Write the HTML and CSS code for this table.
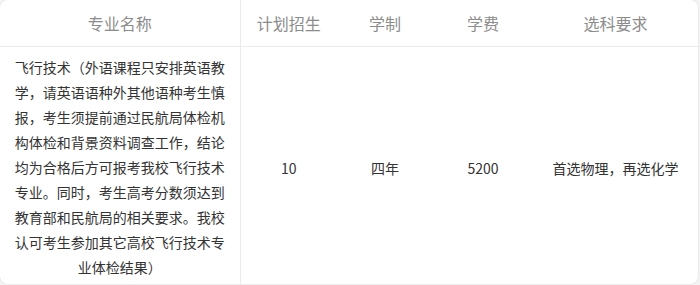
FILE: index.html
```html
<!DOCTYPE html>
<html lang="zh">
<head>
<meta charset="utf-8">
<link rel="stylesheet" href="styles.css">
</head>
<body>
<div class="card">
  <table class="major-table">
    <colgroup>
      <col class="c-name">
      <col class="c-plan">
      <col class="c-years">
      <col class="c-fee">
      <col class="c-req">
    </colgroup>
    <thead>
      <tr>
        <th class="first">专业名称</th>
        <th>计划招生</th>
        <th>学制</th>
        <th>学费</th>
        <th>选科要求</th>
      </tr>
    </thead>
    <tbody>
      <tr>
        <td class="first name">飞行技术（外语课程只安排英语教学，请英语语种外其他语种考生慎报，考生须提前通过民航局体检机构体检和背景资料调查工作，结论均为合格后方可报考我校飞行技术专业。同时，考生高考分数须达到教育部和民航局的相关要求。我校认可考生参加其它高校飞行技术专业体检结果）</td>
        <td>10</td>
        <td>四年</td>
        <td>5200</td>
        <td>首选物理，再选化学</td>
      </tr>
    </tbody>
  </table>
</div>
</body>
</html>
```
FILE: styles.css
```css
html, body {
  margin: 0;
  padding: 0;
  background: #f4f4f4;
}
body {
  font-family: "Noto Sans CJK SC", "Noto Sans", sans-serif;
  padding: 0 2px 1px 0;
}
.card {
  width: 698px;
  height: 284px;
  background: #fff;
  border-radius: 8px;
  box-shadow: 0 0 2px rgba(0, 0, 0, 0.12);
  overflow: hidden;
}
.major-table {
  width: 698px;
  border-collapse: collapse;
  table-layout: fixed;
}
.c-name { width: 240px; }
.c-plan { width: 97px; }
.c-years { width: 96px; }
.c-fee { width: 100px; }
.c-req { width: 165px; }
th {
  height: 46px;
  padding: 0;
  font-size: 16px;
  font-weight: normal;
  color: #8c8c8c;
  text-align: center;
  border-bottom: 1px solid #ebebeb;
}
td {
  height: 236px;
  padding: 0;
  font-size: 14px;
  color: #333;
  text-align: center;
  vertical-align: middle;
  line-height: 25px;
}
.first {
  border-right: 1px solid #ebebeb;
}
td.name {
  padding: 2px 14px 4px 14px;
}
```
